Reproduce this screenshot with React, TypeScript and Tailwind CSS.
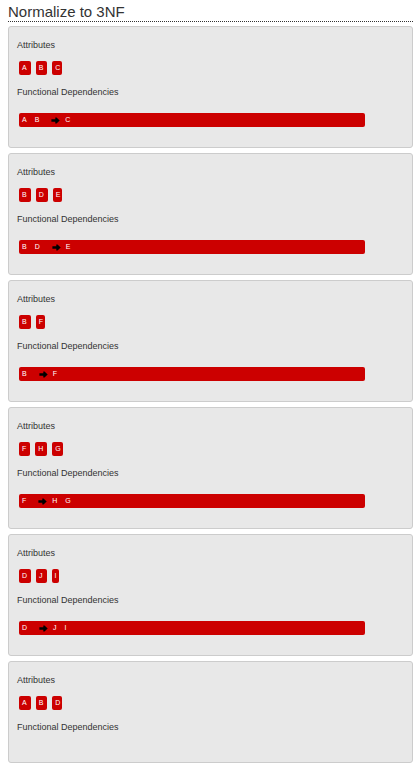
type Dependency = { from: string[]; to: string[] };
type Relation = { attributes: string[]; dependencies: Dependency[] };

const relations: Relation[] = [
  { attributes: ["A", "B", "C"], dependencies: [{ from: ["A", "B"], to: ["C"] }] },
  { attributes: ["B", "D", "E"], dependencies: [{ from: ["B", "D"], to: ["E"] }] },
  { attributes: ["B", "F"], dependencies: [{ from: ["B"], to: ["F"] }] },
  { attributes: ["F", "H", "G"], dependencies: [{ from: ["F"], to: ["H", "G"] }] },
  { attributes: ["D", "J", "I"], dependencies: [{ from: ["D"], to: ["J", "I"] }] },
  { attributes: ["A", "B", "D"], dependencies: [] },
];

function Arrow() {
  return (
    <svg className="mt-px mr-[5px] ml-1 h-[7px] w-[9px] shrink-0" viewBox="0 0 9 7" role="img" aria-label="determines">
      <path d="M0.4 2.2H4.3V0.4H5.5L8.7 3.5L5.5 6.6H4.3V4.8H0.4Z" fill="#000" />
    </svg>
  );
}

function Names({ names }: { names: string[] }) {
  return (
    <>
      {names.map((name) => (
        <span key={name} className="pr-2">
          {name}
        </span>
      ))}
    </>
  );
}

function RelationCard({ relation }: { relation: Relation }) {
  return (
    <section className="rounded-[3px] border border-[#ccc] bg-[#e8e8e8] px-2 pt-3">
      <h2 className="text-[9px] leading-3">Attributes</h2>
      <ul className="mt-[10px] ml-[2px] flex gap-[5px] text-[7px] leading-[14px] text-white">
        {relation.attributes.map((name) => (
          <li key={name} className="rounded-[2px] bg-[#c00] pr-1 pl-[3px] last:pr-[2px]">
            {name}
          </li>
        ))}
      </ul>
      <h2 className="mt-[11px] text-[9px] leading-3">Functional Dependencies</h2>
      <ul className="mr-px ml-[2px] pt-[15px] pb-[14px] text-[7px] leading-[14px] text-white">
        {relation.dependencies.map((dependency) => (
          <li
            key={dependency.from.join("")}
            className="mb-[6px] flex w-[90%] items-center rounded-[2px] bg-[#c00] pl-[3px]"
          >
            <Names names={dependency.from} />
            <Arrow />
            <Names names={dependency.to} />
          </li>
        ))}
      </ul>
    </section>
  );
}

export default function App() {
  return (
    <main className="bg-white pr-[5px] pb-[6px] pl-2 font-['Liberation_Sans',Arial,sans-serif] text-[#333]">
      <h1 className="border-b border-dotted border-[#333] pt-[2px] text-[15px] leading-[19px]">Normalize to 3NF</h1>
      <div className="mt-1 flex flex-col gap-[5px]">
        {relations.map((relation) => (
          <RelationCard key={relation.attributes.join("")} relation={relation} />
        ))}
      </div>
    </main>
  );
}
